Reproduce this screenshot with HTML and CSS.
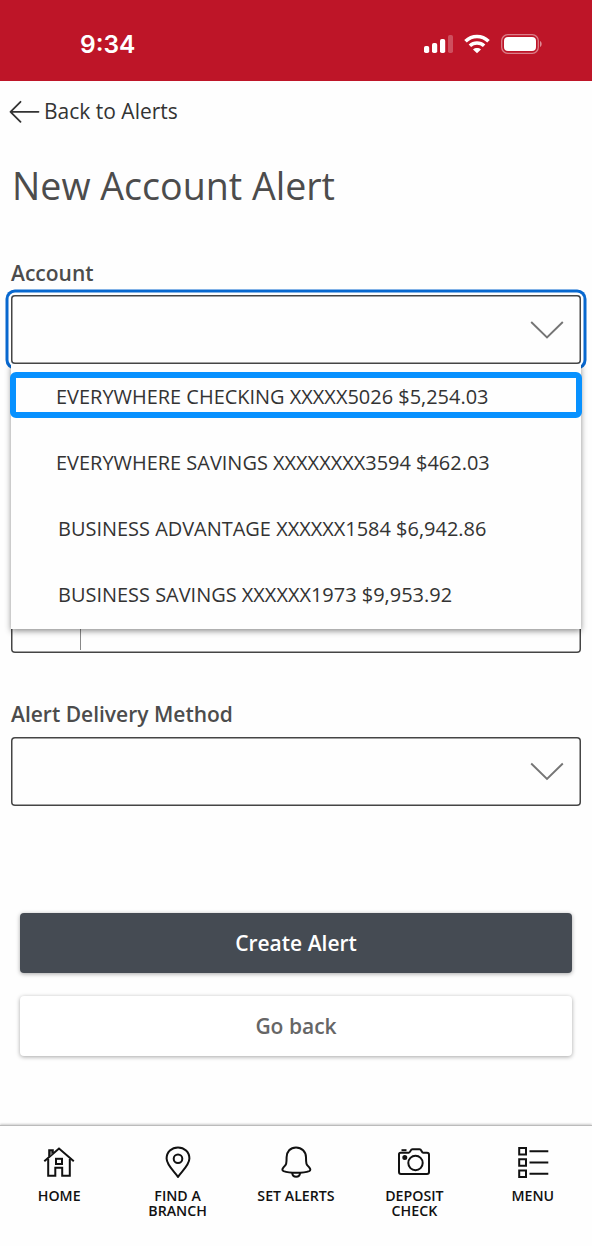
FILE: index.html
```
<!DOCTYPE html>
<html lang="en">
<head>
  <meta charset="UTF-8">
  <meta name="viewport" content="width=device-width, initial-scale=1.0">
  <title>New Account Alert</title>
  <link rel="stylesheet" href="styles.css">
</head>
<body>
  <header class="status-bar">
    <span class="time">9:34</span>
    <div class="status-icons">
      <svg width="29" height="20" viewBox="0 0 29 20" fill="#fff">
        <rect x="0" y="12" width="5.2" height="7" rx="1.8"/>
        <rect x="8" y="9" width="5.2" height="10" rx="1.8"/>
        <rect x="16" y="5" width="5.2" height="14" rx="1.8"/>
        <rect x="24" y="1" width="5" height="18" rx="1.8" opacity="0.25"/>
      </svg>
      <svg class="wifi" width="26" height="20" viewBox="0 0 26 20" fill="none" stroke="#fff" stroke-width="3.6">
        <path d="M1.5 7.3C8 .9 18 .9 24.5 7.3"/>
        <path d="M5.9 11.8C10 8 16 8 20.1 11.8"/>
        <path d="M13 19.3L9 15.4C11.3 13.5 14.7 13.5 17 15.4Z" fill="#fff" stroke="none"/>
      </svg>
      <svg width="41" height="20" viewBox="0 0 41 20" fill="#fff">
        <rect x=".7" y=".7" width="36.6" height="18.6" rx="6" fill="none" stroke="#fff" stroke-width="1.3" opacity="0.45"/>
        <rect x="3" y="3" width="32" height="14" rx="4"/>
        <path d="M39 7C41.2 8 41.2 12 39 13Z" opacity="0.5"/>
      </svg>
    </div>
  </header>

  <main class="content">
    <a class="back-link">
      <svg width="31" height="24" viewBox="0 0 31 24" fill="none" stroke="#333" stroke-width="1.8" stroke-linecap="round" stroke-linejoin="round">
        <path d="M29.5 12.8H1.5M11.5 2.8L1.5 12.8L11.5 22.8"/>
      </svg>
      <span>Back to Alerts</span>
    </a>

    <h1>New Account Alert</h1>

    <form>
      <div class="form-group account">
        <label>Account</label>
        <div class="select focused">
          <svg class="chevron" viewBox="0 0 34 19"><path d="M1.2 2L17 17.5L32.8 2"/></svg>
        </div>
        <ul class="dropdown">
          <li class="selected">EVERYWHERE CHECKING XXXXX5026 $5,254.03</li>
          <li>EVERYWHERE SAVINGS XXXXXXXX3594 $462.03</li>
          <li class="business">BUSINESS ADVANTAGE XXXXXX1584 $6,942.86</li>
          <li class="business">BUSINESS SAVINGS XXXXXX1973 $9,953.92</li>
        </ul>
      </div>

      <div class="amount">
        <span class="amount-prefix"></span>
      </div>

      <div class="form-group">
        <label>Alert Delivery Method</label>
        <div class="select">
          <svg class="chevron" viewBox="0 0 34 19"><path d="M1.2 1.5L17 17L32.8 1.5"/></svg>
        </div>
      </div>

      <div class="buttons">
        <button type="button" class="primary">Create Alert</button>
        <button type="button">Go back</button>
      </div>
    </form>
  </main>

  <nav class="tab-bar">
    <a>
      <svg viewBox="0 0 32 32">
        <path d="M5.2 13V29.8H12.3V21.8H19.2V29.8H26.8V13"/>
        <path d="M1.3 15.2L16 2.6L30.8 15.2"/>
        <path d="M6.2 10.5V4.2H9.8V7.4" fill="#777"/>
        <rect x="13" y="12.8" width="6" height="5.2"/>
      </svg>
      <span>HOME</span>
    </a>
    <a>
      <svg viewBox="0 0 32 32">
        <path d="M16 30.8C12.2 25.4 4.6 19 4.6 12.5C4.6 6 9.7 1.4 16 1.4S27.4 6 27.4 12.5C27.4 19 19.8 25.4 16 30.8Z"/>
        <circle cx="16" cy="12.8" r="4.3"/>
      </svg>
      <span>FIND A<br>BRANCH</span>
    </a>
    <a>
      <svg viewBox="0 0 32 32">
        <path d="M16 1.4C10.3 1.4 6.6 5.7 6.6 11.3C6.6 19 6 18.5 3.5 21.4C2 23.2 2 24.4 3.6 25.1C9.5 27.4 23.5 27.4 29.2 25.1C30.8 24.4 30.6 23.2 29.2 21.4C26.6 18.5 26 19 26 11.3C26 5.7 21.7 1.4 16 1.4Z"/>
        <path d="M12.3 27C12.4 32 19.9 32 20 27"/>
      </svg>
      <span>SET ALERTS</span>
    </a>
    <a>
      <svg viewBox="0 0 32 32">
        <path d="M2.5 6.7H10.8C12.5 6.7 12.3 3.2 14.5 3.2H21.5C23.7 3.2 23.3 6.7 25.2 6.7H29C30.5 6.7 31 7.2 31 8.7V26C31 27.5 30.5 28 29 28H3C1.5 28 1 27.5 1 26V8.2C1 7.2 1.5 6.7 2.5 6.7Z"/>
        <path d="M3.5 4.2H8.5"/>
        <circle cx="17.5" cy="17" r="7.2"/>
        <circle cx="6.8" cy="11.5" r="1.5" fill="#111"/>
      </svg>
      <span>DEPOSIT<br>CHECK</span>
    </a>
    <a>
      <svg viewBox="0 0 32 32">
        <path d="M2.2 2H9V8.5H2.2ZM2.2 13.2H9V19.7H2.2ZM2.2 24.5H9V31H2.2Z"/>
        <path d="M12.5 5.3H31.3M12.5 16.5H31.3M12.5 27.7H31.3"/>
      </svg>
      <span>MENU</span>
    </a>
  </nav>
</body>
</html>
```

FILE: styles.css
```
* {
  box-sizing: border-box;
}

body {
  font-family: "Open Sans", "Noto Sans", sans-serif;
  margin: 0;
  height: 1246px;
  display: flex;
  flex-direction: column;
  color: #333;
  background: #fefefe;
  overflow: hidden;
}

svg {
  display: block;
}

.status-bar {
  height: 81px;
  padding: 7px 50px 0 80px;
  display: flex;
  justify-content: space-between;
  align-items: center;
  background: #be1528;
}

.time {
  font-family: Inter, sans-serif;
  font-size: 24.5px;
  font-weight: 600;
  line-height: 30px;
  color: #fff;
}

.status-icons {
  display: flex;
  align-items: center;
  gap: 11px;
}

.content {
  flex: 1;
  padding: 0 11px;
}

.back-link {
  display: flex;
  align-items: center;
  gap: 4px;
  height: 60px;
  margin-left: -2px;
  font-size: 21px;
}

h1 {
  margin: 0 0 27px 1px;
  font-size: 37.6px;
  font-weight: 400;
  line-height: 90px;
  color: #4c4c4c;
}

.form-group {
  position: relative;
}

label {
  display: block;
  margin-bottom: 9px;
  font-size: 21px;
  font-weight: 600;
  line-height: 28px;
  color: #4c4c4c;
}

.account label {
  padding-top: 1px;
  margin-bottom: 8px;
}

.select {
  height: 69px;
  padding-right: 17px;
  display: flex;
  align-items: center;
  justify-content: flex-end;
  border-radius: 4px;
  box-shadow: inset 0 0 0 1.5px #454545;
}

.focused {
  box-shadow: inset 0 0 0 1.5px #454545, 0 0 0 2.5px #fff, 0 0 0 5.5px #0868cf; /* focus ring */
}

.chevron {
  width: 34px;
  height: 19px;
  fill: none;
  stroke: #757575;
  stroke-width: 1.9;
}

/* Open account list, over the fields below */
.dropdown {
  position: absolute;
  top: 106px;
  left: 0;
  width: 570px;
  height: 265px;
  margin: 0;
  padding: 8px 0 0;
  list-style: none;
  background: #fefefe;
  box-shadow: 0 2px 6px rgba(0, 0, 0, 0.45);
  clip-path: inset(0 -10px -10px -10px);
}

.dropdown li {
  height: 46px;
  margin-bottom: 20px;
  padding-left: 45px;
  font-size: 19.97px;
  line-height: 49px;
  white-space: nowrap;
}

.dropdown .selected {
  margin: 0 -1px 20px;
  padding-left: 40px;
  border: 6px solid #0791ff;
  border-radius: 6px;
  line-height: 37px;
}

.dropdown .business {
  padding-left: 47px;
}

.amount {
  height: 69px;
  margin: 220px 0 47px;
  padding-bottom: 3px;
  display: flex;
  border-radius: 4px;
  box-shadow: inset 0 0 0 1.5px #454545;
}

.amount-prefix {
  width: 70px;
  border-right: 1px solid #888;
}

.buttons {
  display: flex;
  flex-direction: column;
  gap: 23px;
  padding: 107px 9px 0;
}

button {
  height: 60px;
  border: none;
  border-radius: 4px;
  font-family: inherit;
  font-size: 21px;
  font-weight: 600;
  color: #666;
  background: #fff;
  box-shadow: 0 1px 4px rgba(0, 0, 0, 0.35);
}

.primary {
  color: #fff;
  background: #454b53;
}

.tab-bar {
  height: 121px;
  padding-top: 20px;
  display: grid;
  grid-template-columns: repeat(5, 1fr);
  border-top: 1px solid #bbb;
  box-shadow: 0 -1px 2px rgba(0, 0, 0, 0.2);
}

.tab-bar a {
  display: flex;
  flex-direction: column;
  align-items: center;
  gap: 11px;
  font-size: 14.2px;
  font-weight: 600;
  line-height: 14.5px;
  text-align: center;
  color: #111;
}

.tab-bar svg {
  width: 32px;
  height: 32px;
  fill: none;
  stroke: #111;
  stroke-width: 2;
}
```
